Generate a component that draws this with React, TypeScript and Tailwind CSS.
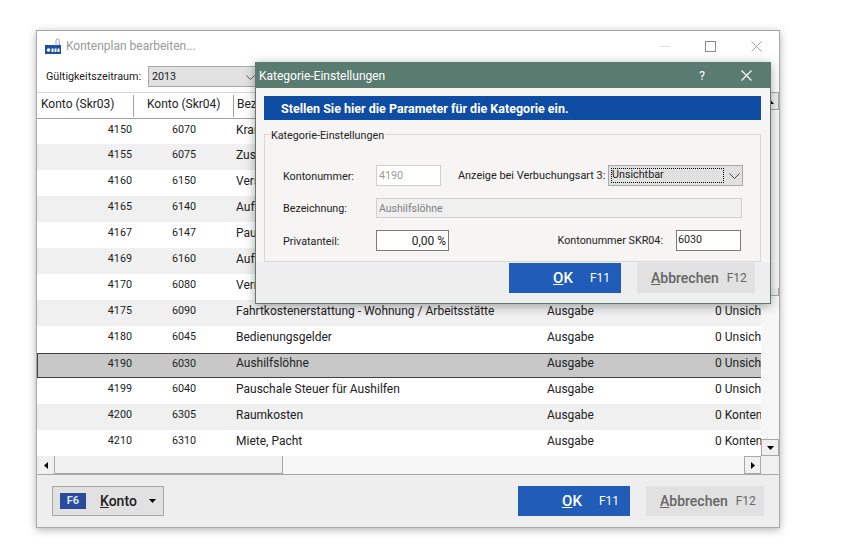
const rows = [
  ["4150", "6070", "Krankengeld-Zuschüsse", "Ausgabe", "0 Unsichtbar"],
  ["4155", "6075", "Zuschüsse", "Ausgabe", "0 Unsichtbar"],
  ["4160", "6150", "Versorgungskassen", "Ausgabe", "0 Unsichtbar"],
  ["4165", "6140", "Aufwendungen Altersversorgung", "Ausgabe", "0 Unsichtbar"],
  ["4167", "6147", "Pauschale Steuer", "Ausgabe", "0 Unsichtbar"],
  ["4169", "6160", "Aufwendungen Unterstützung", "Ausgabe", "0 Unsichtbar"],
  ["4170", "6080", "Vermögenswirksame Leistungen", "Ausgabe", "0 Unsichtbar"],
  ["4175", "6090", "Fahrtkostenerstattung - Wohnung / Arbeitsstätte", "Ausgabe", "0 Unsichtbar"],
  ["4180", "6045", "Bedienungsgelder", "Ausgabe", "0 Unsichtbar"],
  ["4190", "6030", "Aushilfslöhne", "Ausgabe", "0 Unsichtbar"],
  ["4199", "6040", "Pauschale Steuer für Aushilfen", "Ausgabe", "0 Unsichtbar"],
  ["4200", "6305", "Raumkosten", "Ausgabe", "0 Kontenplan"],
  ["4210", "6310", "Miete, Pacht", "Ausgabe", "0 Kontenplan"],
]

const track =
  "bg-[repeating-conic-gradient(#f0f0f0_0%_25%,#ffffff_0%_50%)] bg-[length:2px_2px]"

function Arrow({ dir }: { dir: "up" | "down" | "left" | "right" }) {
  const points = {
    up: "0,4 7,4 3.5,0",
    down: "0,0 7,0 3.5,4",
    left: "4,0 4,7 0,3.5",
    right: "0,0 0,7 4,3.5",
  }[dir]
  const box = dir === "up" || dir === "down" ? "0 0 7 4" : "0 0 4 7"
  const size = dir === "up" || dir === "down" ? "h-1 w-[7px]" : "h-[7px] w-1"
  return (
    <svg viewBox={box} className={size}>
      <polygon points={points} fill="#000" />
    </svg>
  )
}

function Chevron({ className }: { className: string }) {
  return (
    <svg viewBox="0 0 11 6" className={className}>
      <polyline points="0.5,0.5 5.5,5.5 10.5,0.5" fill="none" stroke="#444" strokeWidth="1" />
    </svg>
  )
}

function CloseX({ color, width }: { color: string; width: number }) {
  return (
    <svg viewBox="0 0 11 11" className="h-[11px] w-[11px]">
      <path d="M0.5 0.5L10.5 10.5M10.5 0.5L0.5 10.5" stroke={color} strokeWidth={width} fill="none" />
    </svg>
  )
}

function HeaderCell({ className, children }: { className: string; children: string }) {
  return (
    <div className={`flex h-[22px] shrink-0 items-center border-r border-[#a0a0a0] pb-[4px] ${className}`}>
      {children}
    </div>
  )
}

function Logo() {
  return (
    <svg viewBox="0 0 16 16" className="h-4 w-4">
      <rect x="0" y="7" width="16" height="9" fill="#1d4f9c" />
      <path d="M11 8V2.5a1.6 1.6 0 0 1 3.2 0V7" fill="none" stroke="#8a96ad" strokeWidth="0.9" />
      <ellipse cx="3.5" cy="12" rx="1.8" ry="1.8" fill="#fff" />
      <rect x="6.5" y="10.5" width="2" height="3.5" fill="#fff" />
      <rect x="9.5" y="10.5" width="2" height="3.5" fill="#fff" />
      <rect x="12.5" y="10.5" width="2" height="3.5" fill="#fff" />
    </svg>
  )
}

function Field({ className, children }: { className: string; children?: string }) {
  return <div className={`flex shrink-0 items-center ${className}`}>{children}</div>
}

function OkButton() {
  return (
    <div className="flex h-[30px] w-[112px] items-center justify-end bg-[#205cb8] pr-[11px] text-[12px] text-white">
      <span className="mr-[17px] text-[15px] font-medium">
        <u>O</u>K
      </span>
      <span>F11</span>
    </div>
  )
}

function CancelButton() {
  return (
    <div className="ml-[16px] flex h-[30px] w-[118px] items-center bg-[#e1e1e1] pl-[14px] text-[12px] text-[#666666]">
      <span className="mr-[8px] text-[14px] font-medium">
        <u>A</u>bbrechen
      </span>
      <span>F12</span>
    </div>
  )
}

export default function App() {
  return (
    <div className="h-[546px] w-[850px] overflow-hidden bg-white pl-[36px] pt-[30px] font-['Roboto',sans-serif] text-[12px] text-[#222222]">
      <div className="relative flex h-[498px] w-[744px] flex-col border border-[#a8a8a8] bg-white shadow-[0_2px_8px_rgba(0,0,0,0.3)]">
        <div className="flex h-[30px] shrink-0 items-center pl-[8px] text-[#9a9a9a]">
          <Logo />
          <span className="ml-[5px]">Kontenplan bearbeiten...</span>
          <div className="ml-auto flex items-center">
            <div className="h-px w-[10px] bg-[#e0e0e0]" />
            <div className="ml-[35px] h-[11px] w-[11px] border border-[#8a8a8a]" />
            <div className="ml-[35px] mr-[17px] flex">
              <CloseX color="#a0a0a0" width={1} />
            </div>
          </div>
        </div>

        <div className="mt-[5px] flex h-[21px] shrink-0 items-center pl-[9px] text-[10.75px]">
          <span className="w-[102px] whitespace-nowrap pt-[2px]">Gültigkeitszeitraum:</span>
          <div className="flex h-[21px] w-[110px] items-center border border-[#a8a8a8] bg-[#e1e1e1] pl-[3px] pt-[2px]">
            2013
            <Chevron className="ml-auto mr-[2px] h-[5px] w-[9px]" />
          </div>
        </div>

        <div className="mt-[5px] flex min-h-0 flex-1">
          <div className="flex min-w-0 flex-1 flex-col">
            <div className="flex h-[27px] shrink-0 items-start border-b border-t border-[#d4d4d4] border-b-[#a0a0a0] pl-[4px] pt-[2px]">
              <HeaderCell className="w-[93px]">Konto (Skr03)</HeaderCell>
              <HeaderCell className="w-[100px] pl-[13px]">Konto (Skr04)</HeaderCell>
              <div className="flex h-[22px] items-center pb-[4px] pl-[3px]">Bezeichnung</div>
            </div>

            <div className="flex flex-col">
              {rows.map((row, i) => {
                const selected = row[0] === "4190"
                return (
                  <div
                    key={row[0]}
                    className={`flex items-center whitespace-nowrap ${
                      selected
                        ? "mt-px h-[25px] bg-[#c8c8c8] pb-[5px] shadow-[inset_1px_1px_0_#404040,inset_0_-1px_0_#404040]"
                        : i === 0
                          ? "h-[25px] bg-white pb-[4px]"
                          : i % 2 === 1
                            ? "h-[26px] bg-[#f0f0f0] pb-[5px]"
                            : "h-[26px] bg-white pb-[5px]"
                    }`}
                  >
                    <div className="w-[95px] shrink-0 pt-[2px] text-right text-[10.75px]">{row[0]}</div>
                    <div className="w-[40px] shrink-0" />
                    <div className="w-[64px] shrink-0 pt-[2px] text-[10.75px]">{row[1]}</div>
                    <div className="w-[311px] shrink-0">{row[2]}</div>
                    <div className="w-[168px] shrink-0">{row[3]}</div>
                    <div className="min-w-0 flex-1 overflow-hidden">{row[4]}</div>
                  </div>
                )
              })}
            </div>

            <div className={`flex h-[18px] items-stretch ${track}`}>
              <div className="flex w-[17px] items-center justify-center bg-[#f0f0f0]">
                <Arrow dir="left" />
              </div>
              <div className="w-[229px] border-b border-l border-r border-[#a8a8a8] bg-[#f0f0f0]" />
              <div className="ml-auto flex w-[17px] items-center justify-center border border-[#a8a8a8] bg-[#f0f0f0]">
                <Arrow dir="right" />
              </div>
            </div>
          </div>

          <div className="flex w-[18px] shrink-0 flex-col bg-[#f0f0f0]">
            <div className={`flex flex-1 flex-col ${track}`}>
              <div className="flex h-[18px] items-center justify-center border border-[#a8a8a8] bg-[#f0f0f0] pt-[2px]">
                <Arrow dir="up" />
              </div>
              <div className="mt-[178px] h-[8px] border-b border-r border-[#a8a8a8] bg-[#f0f0f0]" />
              <div className="mt-auto flex h-[17px] items-center justify-center border border-[#a8a8a8] bg-[#f0f0f0]">
                <Arrow dir="down" />
              </div>
            </div>
            <div className="h-[18px]" />
          </div>
        </div>

        <div className="flex h-[53px] shrink-0 items-center border-t border-[#a8a8a8] bg-[#eeeeee] pl-[15px] pr-[15px]">
          <div className="flex h-[30px] w-[112px] items-center border border-[#a8a8a8] bg-[#e1e1e1] pl-[7px]">
            <span className="flex h-4 w-[26px] items-center justify-center bg-[#2a4b9b] text-[11px] font-bold text-[#dfe4f2]">
              F6
            </span>
            <span className="ml-[14px] text-[14px] font-medium">
              <u>K</u>onto
            </span>
            <span className="ml-[12px]">
              <svg viewBox="0 0 7 4" className="h-1 w-[7px]">
                <polygon points="0,0 7,0 3.5,4" fill="#000" />
              </svg>
            </span>
          </div>
          <div className="ml-auto flex">
            <OkButton />
            <CancelButton />
          </div>
        </div>

        <div className="absolute left-[218px] top-[31px] flex h-[242px] w-[516px] flex-col border border-[#5a7b70] bg-[#eeeeee] shadow-[0_2px_10px_rgba(0,0,0,0.35)]">
          <div className="flex h-[25px] shrink-0 items-center bg-[#5a7b70] pl-[3px] text-white">
            Kategorie-Einstellungen
            <span className="ml-auto">?</span>
            <div className="ml-[36px] mr-[18px] flex">
              <CloseX color="#ffffff" width={1.2} />
            </div>
          </div>
          <div className="flex h-[174px] shrink-0 flex-col bg-[#f6f5f4] pl-[8px] pr-[9px] pt-[8px] text-[10.75px]">
            <div className="flex h-[24px] shrink-0 items-center bg-[#0f4ca3] pl-[17px] pt-[2px] text-[12.5px] font-bold text-white">
              Stellen Sie hier die Parameter für die Kategorie ein.
            </div>
            <div className="relative mt-[14px] flex h-[128px] shrink-0 flex-col border border-[#d8d8d8] pl-[18px] pr-[19px] pt-[30px]">
              <span className="absolute left-[5px] top-[-7px] bg-[#f6f5f4] px-px">Kategorie-Einstellungen</span>
              <div className="flex items-center">
                <span className="w-[93px] shrink-0 pt-[3px]">Kontonummer:</span>
                <Field className="h-[21px] w-[65px] border border-[#cfcfcf] bg-white pl-[2px] pt-[2px] text-[#9a9a9a]">4190</Field>
                <span className="ml-[17px] w-[150px] shrink-0 whitespace-nowrap pt-[2px] text-[10.9px]">Anzeige bei Verbuchungsart 3:</span>
                <div className="flex h-[21px] w-[135px] shrink-0 items-center border border-[#a8a8a8] bg-[#e1e1e1] p-[2px]">
                  <span className="flex h-full w-[113px] items-center border border-dotted border-black">Unsichtbar</span>
                  <Chevron className="ml-[5px] h-[6px] w-[11px]" />
                </div>
              </div>
              <div className="mt-[12px] flex items-center">
                <span className="w-[93px] shrink-0 pt-[3px]">Bezeichnung:</span>
                <Field className="h-[20px] w-[366px] border border-[#cfcfcf] bg-[#f0f0f0] pl-[2px] pt-[2px] text-[10.5px] text-[#808080]">Aushilfslöhne</Field>
              </div>
              <div className="mt-[12px] flex items-center">
                <span className="w-[93px] shrink-0 pt-[3px]">Privatanteil:</span>
                <Field className="h-[21px] w-[73px] justify-end border border-[#7a7a7a] bg-white pr-[2px] text-[12px]">0,00 %</Field>
                <span className="ml-auto mr-[13px] whitespace-nowrap pt-[2px]">Kontonummer SKR04:</span>
                <Field className="h-[21px] w-[65px] border border-[#7a7a7a] bg-white pl-[1px]">6030</Field>
              </div>
            </div>
          </div>
          <div className="mt-px flex justify-end pr-[15px]">
            <OkButton />
            <CancelButton />
          </div>
        </div>
      </div>
    </div>
  )
}
